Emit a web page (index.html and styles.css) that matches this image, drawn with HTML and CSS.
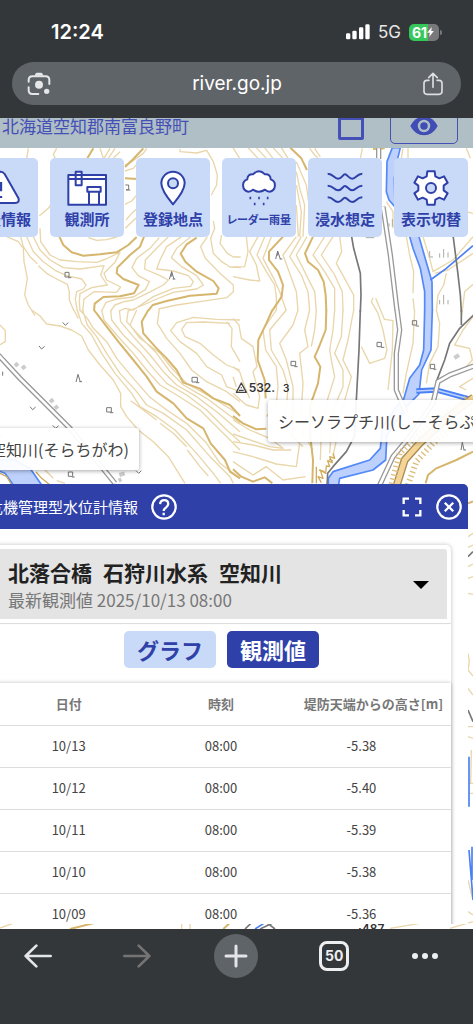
FILE: index.html
```html
<!DOCTYPE html>
<html lang="ja">
<head>
<meta charset="utf-8">
<meta name="viewport" content="width=device-width, initial-scale=1">
<title>river.go.jp</title>
<link rel="stylesheet" href="styles.css">
</head>
<body>
<header class="browser-top">
  <div class="status">
    <span class="clock">12:24</span>
    <div class="status-right">
      <svg class="signal" viewBox="0 0 72 48" aria-hidden="true"><rect x="0" y="28" width="13" height="18" rx="4"/><rect x="19" y="20" width="13" height="26" rx="4"/><rect x="39" y="10" width="13" height="36" rx="4"/><rect x="58" y="1" width="13" height="45" rx="4"/></svg>
      <span class="network">5G</span>
      <span class="battery"><span class="battery-level">61</span><svg class="bolt" viewBox="0 0 20 30" aria-hidden="true"><path d="M14 0 0 17h8L6 30 20 12h-8z"/></svg></span>
    </div>
  </div>
  <div class="urlbar">
    <button class="plain" aria-label="カメラ検索"><svg class="lens" viewBox="0 0 72 72" aria-hidden="true"><path d="M5 29v-5Q5 13 16 13h40q11 0 11 11v12M5 46v9q0 11 11 11h18" fill="none" stroke="#e4e6e8" stroke-width="6" stroke-linecap="round"/><path d="M22 11l5-8q1-1 3-1h12q2 0 3 1l5 8z" fill="#e4e6e8"/><circle cx="36" cy="38" r="12" fill="#e4e6e8"/><circle cx="59" cy="58" r="8" fill="#e4e6e8"/></svg></button>
    <span class="url">river.go.jp</span>
    <button class="plain" aria-label="共有"><svg class="share" viewBox="0 0 60 72" aria-hidden="true"><path d="M18 25H12Q3 25 3 34v24q0 9 9 9h36q9 0 9-9V34q0-9-9-9h-6M30 46V5M17 17 30 4l13 13" fill="none" stroke="#dcdedf" stroke-width="5" stroke-linecap="round" stroke-linejoin="round"/></svg></button>
  </div>
</header>

<main class="page">
  <svg class="map" viewBox="0 354 1419 2433" preserveAspectRatio="xMinYMin slice" aria-hidden="true">
    <g transform="translate(0 435)">
      <path class="thin" d="M85 10 80 40M170 10 160 28 175 60M300 10 310 40M330 10 312 40M345 10 325 40M360 20 340 40M375 60 395 50 430 25 440 10M375 78 400 70 425 40M540 12 540 20 590 24 620 16 640 50 652 90 650 120 634 150M375 178 395 168 412 148M378 225 395 205 412 190M376 250 412 215M118 212 145 190 156 172M20 275 55 290 70 310 72 350 82 400 74 450 85 480 105 512M62 275 70 305 90 335 112 356M115 362 140 385 170 402 202 418 208 440 208 465 222 498M80 275 100 320 130 350 165 376 200 392 245 402 258 420 250 432 230 440 226 462 232 498M120 250 122 290 150 330 180 345 230 350 290 352 318 342 360 322 345 352 312 385 320 405 362 426 350 442 282 440 252 462 248 498M100 275 120 315 150 345 190 368 240 372 312 362 302 390 322 420 275 428 240 446 238 470 240 498M265 278 290 286 320 284 350 276M478 278 450 310 410 340 396 368 415 392 448 410 436 434 400 456 350 462 318 472 305 498M505 275 470 310 436 345 434 372 480 392 505 405 490 420 440 446 400 465 372 470 345 480 332 498M545 275 500 305 480 345 470 372 520 378 565 392 580 410 572 424 520 430 460 455 400 495 375 490 358 498M572 275 530 310 514 338 545 365 590 392 610 420 590 432 520 442 470 462 430 480 385 498M622 275 602 305 616 340 660 385 700 420 700 440 680 458 600 470 530 480 475 492M640 228 644 250 632 280 640 325 665 350 690 366 722 368M665 270 660 295 682 325 700 336 722 336"/>
      <path class="thick" d="M280 10 262 40M375 66 400 42 430 10M375 100 412 102M178 275 190 300 215 322 250 332 300 328 350 322 385 300 410 276M432 275 420 305 390 330 352 368 350 385 370 402 416 420 402 445 360 454 310 456 284 476 282 497M590 278 560 298 542 326 556 350 590 380 640 408 656 430 650 446 570 452 500 468 458 480 445 497"/>
      <path class="mark" d="M376 120h10v14h-8M378 135h13M195 382h12v14h-12zM204 398h10M508 403 515 380 522 403M518 402h8M515 380V395"/>
    </g>
    <g transform="translate(699 435)">
      <path class="thin" d="M45 8 75 40M70 8 100 40M95 8 120 40M120 8 150 40M145 8 165 40M0 8 20 40M230 10 245 30 255 40M245 10 262 36M388 10 382 40M190 80 200 130 215 180 210 275M190 120 205 200 200 275M190 50 220 120 228 180M190 180 196 275M40 275 45 320 35 365 0 366M75 275 50 320 70 360 80 408 50 405 0 395M95 275 72 330 100 380 125 420 130 455 130 497M115 275 90 340 122 400 140 440 160 497M190 275 150 330 172 390 190 440 195 497M205 275 170 335 205 390 225 440 230 497M222 275 190 330 225 400 245 440 250 497M275 275 240 330 275 380 305 430 305 497M300 275 265 330 305 390 328 440 330 497M320 275 326 320 310 355 340 410 362 450 362 497M420 458 415 470 435 505M428 460 455 525M520 275 530 330 542 380 540 445M540 460 544 497M570 275 590 340 600 380 660 345 720 275M605 385 645 375 720 325M640 385 632 420 615 450 610 497M700 200 720 205M720 418 695 440 686 512M510 10 505 40M525 10 525 40M700 10 712 40M460 170 480 200 480 250"/>
      <path class="thick" d="M172 8 205 40 222 75M150 275 108 320 108 345 135 380 150 420 146 455 118 497M240 275 216 325 225 350 255 375 272 410 278 450 280 497M420 12 455 10"/>
      <path class="road" d="M437 10V42M450 185 472 330 492 497"/>
      <path class="road-in" d="M437 10V42M450 185 472 330 492 497"/>
      <path class="river" d="M575 497 575 440 562 370 540 310 520 240 540 190 490 190 468 165 460 140 462 50 478 8 502 8 492 50 484 100 486 185 530 190 558 275 578 345 597 410 598 497"/>
      <path class="stream" d="M592 405 640 370 720 302"/>
      <path class="track" d="M355 270 362 310 382 385 384 450 382 500M660 270 674 380 682 450 685 500"/>
      <path class="mark" d="M128 342 134 318 142 342M140 342h8M134 320V332"/>
      <path class="mark soft" d="M468 245V235M478 245V222M620 338V325M632 338V312M645 338V322M590 318V336H600M620 478V465M632 478V450M645 478V465M398 278h26"/>
    </g>
    <g transform="translate(0 930)">
      <path class="thin" d="M95 0 120 18 140 42 180 48 215 60 245 78 265 120 300 165 340 210 362 250 362 290 380 320 415 360 460 395 505 440 555 520M0 45 16 62 16 95 0 104M232 0 245 40 275 75 305 130 345 190 395 250 420 290 470 320 525 360 590 430 640 490 662 520M248 0 262 45 290 80 320 130 360 190 410 245 440 285 490 310 560 360 630 440 690 500 700 520M240 0 262 25 280 55 320 95 350 145 400 205 450 262 500 300 560 340 620 400 660 460 720 505M222 0 235 25M305 0 312 30 350 75 400 130 440 180 480 225 530 255 600 300 660 360 720 420M332 0 335 30 370 75 420 125 460 175 500 220 560 255 620 300 680 360 720 395M358 0 362 35 400 80 450 135 490 185 530 225 590 260 650 305 720 365M385 0 380 35 430 90 470 130 510 185 550 225 620 265 680 310 720 340M410 0 390 45 420 85 480 130 520 180 560 220 640 265 720 315M392 272 430 300 470 330M480 340 520 370 560 410M562 420 600 470 625 498M478 -2 472 40 500 85 540 130 575 180 620 215 680 245 720 275M720 30 650 28 580 22 530 38 512 62 540 95 590 130 620 170 665 195 680 230 720 245M690 40 610 36 560 38 545 58 555 80 600 100 640 135 680 165 720 180M680 36 696 55 694 110 720 155M0 375 40 410 90 445M110 455 160 505M170 512 195 520M0 440 60 450"/>
      <path class="thick" d="M282 0 320 50 355 95 400 150 440 200 470 245 520 280 560 325 610 355 632 400 675 450 690 485 720 505M445 0 425 35 430 70 470 115 500 145 530 180 550 218 600 236 640 265 690 285 720 318"/>
      <path class="road" d="M-5 135 60 205 130 275 210 355 280 440 345 520"/>
      <path class="road-in" d="M-5 135 60 205 130 275 210 355 280 440 345 520"/>
      <path class="river" d="M-10 450 40 448 90 475 125 525 40 525 15 490 -10 480z"/>
      <path class="cliff" d="M0 490 20 500 35 525M108 486 125 505 150 525"/>
      <path class="mark" d="M188 37 196 46 205 38M117 108 125 117 134 109M90 290 98 299 107 291M158 346 167 355 176 347M8 185V197M228 216 234 193 241 216M238 215h8M320 293h14v13h-14zM330 308h10M576 202h16v14h-16zM588 218h10M205 486h13v13h-13zM216 501h8M408 482 416 490 424 482"/>
      <path class="building" d="M45 168 54 160M66 176 76 168M150 276 160 268M164 296 174 288M358 495 374 490M356 512 364 508"/>
    </g>
    <g transform="translate(699 930)">
      <path class="thin" d="M0 25 18 45 25 85 60 110 72 170 60 185 80 260 75 295 40 285 0 250M0 170 20 185 35 230 50 265M0 200 10 230M130 0 90 60 98 120 130 170 135 230 130 280 100 320M160 0 110 60 115 120 150 180 165 230 160 300 150 350 200 400 190 470 130 462 60 440 0 425M195 0 180 45 140 100 160 150 180 230 180 300 180 380 210 410M230 0 215 60 225 110 200 130 210 220 205 300 210 370 240 420M250 0 245 60 235 110M305 0 300 60 290 120 295 150 305 200 280 280 265 360 262 450M330 0 325 80 305 130 330 180 330 230 300 300 290 430M362 0 345 90 330 150 355 200 330 290 300 440M435 10 450 60 462 120 455 145 410 160 385 110M455 28 480 32 478 120 465 240M545 0 540 100 520 190 510 250M610 0 620 40 615 110 590 160 580 220M720 20 690 60 665 105 710 115 718 150 690 180M0 330 50 360 110 385 150 415 110 410 0 372M0 395 60 405 120 420 175 420M0 455 60 495 100 470 150 510 218 500M720 205 680 230 700 240"/>
      <path class="thick" d="M118 0 100 40 76 90 74 150 95 210 98 265M280 0 278 60 255 118 245 140 262 170 255 220 232 285 232 380 240 450 238 520M0 318 30 340 70 358 100 356M0 478 25 500 60 515 95 502 118 520M720 425 670 450 610 475 585 495 578 520"/>
      <path class="cliff" d="M300 430 305 445 290 440 298 458 284 452 290 470 280 468 278 490 262 480 270 505 255 500 265 518M250 470V520M258 480 275 485M288 448 300 452"/>
      <path class="river" d="M575 0 572 120 560 165 530 205 512 268 490 290 448 350 442 415 410 450 300 485 286 505 286 540 314 540 320 505 420 480 458 450 462 375 520 290 558 252 566 180 594 120 598 0"/>
      <path class="stream-wide" d="M550 243 610 240 720 270"/>
      <path class="stream-in" d="M550 243 610 240 720 270"/>
      <path class="track" d="M382 0 378 120 370 270 364 380 340 425 300 470 284 490 282 530M685 0V45M722 15 680 55 650 100 635 150 610 215"/>
      <path class="road" d="M492 0 500 60 490 130 490 240 520 310M722 168 650 195 615 215 600 280 530 380 480 440 438 530"/>
      <path class="road-in" d="M492 0 500 60 490 130 490 240 520 310M722 168 650 195 615 215 600 280 530 380 480 440 438 530"/>
      <path class="highway" d="M722 262 640 325 560 400 515 450 490 530"/>
      <path class="highway-in" d="M722 262 640 325 560 400 515 450 490 530"/>
      <path class="comb" d="M700 265 545 385 500 430 475 525"/>
      <path class="comb" d="M722 305 600 400 550 455 525 525"/>
      <path class="mark" d="M174 154h14v13h-14zM184 170h10M432 97h13v13h-13zM444 112h10M538 32h13v13h-13zM548 48h10M592 163h13v13h-13zM602 178h8M684 420 688 397 693 420M692 420h7"/>
      <path class="building" d="M664 144 678 135"/>
      <path class="peak" d="M25 219 40 247H10zM25 232v3M18 241h14"/>
      <text class="peak-label" x="47" y="245">532.</text><text class="peak-label small" x="150" y="245">3</text>
    </g>
    <path class="thin" d="M1404 1610 1419 1600M1404 1642 1419 1635M1404 1700 1419 1692M1404 1735 1419 1730M1404 1780 1419 1783M1404 1960 1408 1985 1404 2010 1419 2028M1404 2065 1419 2085M1404 2180 1419 2180M1404 2210 1419 2215M1414 2250 1412 2350M1404 2350h15M1404 2380h15M1404 2640 1419 2700M1404 2735 1419 2745M0 2784 45 2768M545 2770V2787M570 2770V2787M1170 2785 1260 2770M1350 2785 1419 2765"/>
    <path class="thick" d="M210 2787 280 2770M670 2787 690 2768M1404 1510 1419 1504"/>
    <path class="track" d="M1404 1670 1419 1655M1404 2130 1419 2165"/>
    <path class="stream" d="M1407 2270V2420M1407 2550 1419 2700M1416 2540V2640M765 2787 795 2768"/>
    <path class="track" d="M735 2787 755 2768M780 2787 820 2768M800 2768 825 2787"/>
    <text class="spot-label" x="1074" y="2799">·487</text>
  </svg>

  <div class="address-bar">
    <span class="address">北海道空知郡南富良野町</span>
    <input class="address-check" type="checkbox" aria-label="地図選択">
    <button class="eye-button" aria-label="表示"><svg class="eye" viewBox="0 0 90 62" aria-hidden="true"><path d="M1 31Q17 1 45 1t44 30Q73 61 45 61T1 31z" fill="#3f4db5"/><circle cx="45" cy="31" r="16" fill="none" stroke="#b0bec5" stroke-width="8"/></svg></button>
  </div>

  <nav class="tools" aria-label="地図メニュー">
    <button class="tool"><svg viewBox="0 0 120 108" aria-hidden="true"><path class="ink" d="M49 12Q60-2 71 12L112 84q5 14-10 15H18Q3 98 8 84z"/><path d="M60 36v28M60 78v6" fill="none" stroke="#2f41a8" stroke-width="7"/></svg><span>発表情報</span></button>
    <button class="tool"><svg viewBox="0 0 120 108" aria-hidden="true"><path class="ink" d="M4 15h113v89H4zM4 27h113M26 5h18v41H26zM61 51h40v14H61zM66 65h30v39H66z"/></svg><span>観測所</span></button>
    <button class="tool"><svg viewBox="0 0 120 108" aria-hidden="true"><path class="ink" d="M60 103Q25 62 25 40a35 35 0 0 1 70 0q0 22-35 63z"/><circle class="ink lit" cx="60" cy="40" r="15"/></svg><span>登録地点</span></button>
    <button class="tool"><svg viewBox="0 0 120 108" aria-hidden="true"><path class="ink" d="M28 65a18 19 0 0 1-3-37Q25 12 42 13q18-18 36 0 17-1 17 15a18 19 0 0 1-3 37q-8 0-14-6-18 12-36 0-6 6-14 6z"/><path d="M34 80v8M60 80v8M86 80v8M47 98v8M74 98v8" fill="none" stroke="#2f41a8" stroke-width="5"/></svg><span class="tight">レーダー雨量</span></button>
    <button class="tool"><svg viewBox="0 0 120 108" aria-hidden="true"><path class="wave" d="M8 11C25 11 27 26 39 26S53 13 60 13 71 26 82 26 96 11 112 11M8 47C25 47 27 61 39 61S53 48 60 48 71 61 82 61 96 47 112 47M8 82C25 82 27 96 39 96S53 83 60 83 71 96 82 96 96 82 112 82"/></svg><span>浸水想定</span></button>
    <button class="tool"><svg viewBox="0 0 120 108" aria-hidden="true"><path class="ink" d="M49 4h22l2 15 12 6 14-6 11 19-12 9v14l12 9-11 19-14-6-12 6-2 15H49l-2-15-12-6-14 6L10 70l12-9V47L10 38l11-19 14 6 12-6z"/><circle class="ink lit" cx="60" cy="54" r="15"/></svg><span>表示切替</span></button>
  </nav>

  <div class="map-view">
    <span class="river-label river-label-main">シーソラプチ川(しーそらぷちがわ)</span>
    <span class="river-label river-label-sub">空知川(そらちがわ)</span>
  </div>

  <section class="panel">
    <header class="panel-head">
      <h1 class="panel-title">危機管理型水位計情報</h1>
      <button class="plain" aria-label="ヘルプ"><svg class="round-icon" viewBox="0 0 80 80" aria-hidden="true"><circle cx="40" cy="40" r="36"/><path d="M28 31q1-12 13-12t12 12q0 6-7 11-7 5-7 10M39 58v7"/></svg></button>
      <div class="panel-actions">
        <button class="plain" aria-label="全画面"><svg class="full-icon" viewBox="0 0 60 60" aria-hidden="true"><path d="M5 21V5h16M39 5h16v16M55 39v16H39M21 55H5V39"/></svg></button>
        <button class="plain" aria-label="閉じる"><svg class="round-icon" viewBox="0 0 80 80" aria-hidden="true"><circle cx="40" cy="40" r="36"/><path d="M27 27 53 53M53 27 27 53"/></svg></button>
      </div>
    </header>
    <div class="card">
      <button class="station">
        <span class="station-text">
          <span class="station-name"><span>北落合橋</span><span>石狩川水系</span><span>空知川</span></span>
          <span class="station-time">最新観測値 2025/10/13 08:00</span>
        </span>
        <svg class="caret" viewBox="0 0 16 8" aria-hidden="true"><path d="M0 0h16L8 8z"/></svg>
      </button>
      <div class="tabs">
        <button class="tab">グラフ</button>
        <button class="tab tab-on">観測値</button>
      </div>
      <table class="readings">
        <thead><tr><th class="col-date">日付</th><th class="col-time">時刻</th><th class="col-level">堤防天端からの高さ[m]</th></tr></thead>
        <tbody>
          <tr><td>10/13</td><td>08:00</td><td>-5.38</td></tr>
          <tr><td>10/12</td><td>08:00</td><td>-5.40</td></tr>
          <tr><td>10/11</td><td>08:00</td><td>-5.39</td></tr>
          <tr><td>10/10</td><td>08:00</td><td>-5.38</td></tr>
          <tr><td>10/09</td><td>08:00</td><td>-5.36</td></tr>
        </tbody>
      </table>
    </div>
  </section>
</main>

<footer class="browser-bottom">
  <button class="nav-button" aria-label="戻る"><svg class="arrow" viewBox="0 0 84 72" aria-hidden="true"><path d="M80 36H5M37 5 5 36l32 31"/></svg></button>
  <button class="nav-button" aria-label="進む"><svg class="arrow arrow-off" viewBox="0 0 84 72" aria-hidden="true"><path d="M4 36h75M47 5l32 31-32 31"/></svg></button>
  <button class="nav-button new-tab" aria-label="新しいタブ"><svg class="plus" viewBox="0 0 24 24" aria-hidden="true"><path d="M12 2v20M2 12h20"/></svg></button>
  <button class="nav-button" aria-label="タブ一覧"><span class="tab-count">50</span></button>
  <button class="nav-button nav-more" aria-label="メニュー"><svg class="dots" viewBox="0 0 28 8" aria-hidden="true"><circle cx="4" cy="4" r="3"/><circle cx="14" cy="4" r="3"/><circle cx="24" cy="4" r="3"/></svg></button>
</footer>
</body>
</html>
```

FILE: styles.css
```css
* { box-sizing: border-box; }

body {
  margin: 0;
  height: 100vh;
  display: flex;
  flex-direction: column;
  overflow: hidden;
  background: #fff;
  color: #444;
  font-family: "Noto Sans CJK JP", sans-serif;
}

button {
  margin: 0;
  padding: 0;
  border: 0;
  background: none;
  color: inherit;
  font: inherit;
  flex: none;
}

svg { display: block; }

.plain { display: flex; }

/* Browser chrome */
.browser-top {
  flex: none;
  padding: 0 12px 13px;
  background: #343739;
  color: #fff;
  font-family: Inter, sans-serif;
}

.status {
  height: 62px;
  padding: 2px 22px 0 39px;
  display: flex;
  align-items: center;
  justify-content: space-between;
}

.clock { font-size: 20px; font-weight: 600; }
.status-right { display: flex; align-items: center; gap: 8px; }
.signal { width: 24px; height: 16px; fill: #fff; }
.network { font-size: 17px; color: #e8e8e8; }

.battery {
  position: relative;
  width: 30px;
  height: 17px;
  padding: 0 3px;
  display: flex;
  align-items: center;
  border-radius: 5px;
  background: linear-gradient(90deg, #35c759 62%, #77797a 62%);
  font-size: 14px;
  font-weight: 700;
}

.battery::after {
  content: "";
  position: absolute;
  right: -3px;
  top: 6px;
  width: 2px;
  height: 5px;
  border-radius: 0 2px 2px 0;
  background: #77797a;
}

.bolt { width: 7px; height: 10px; fill: #fff; }

.urlbar {
  height: 43px;
  padding: 0 18px 0 15px;
  display: flex;
  align-items: center;
  justify-content: space-between;
  border-radius: 22px;
  background: #5f6468;
}

.url { font-size: 19px; }
.lens { width: 24px; height: 24px; }
.share { width: 20px; height: 24px; }

/* Page */
.page {
  position: relative;
  flex: 1;
  min-height: 0;
  display: flex;
  flex-direction: column;
  padding-bottom: 5px;
  overflow: hidden;
}

.map { position: absolute; inset: 0; width: 100%; height: 100%; }
.map path { fill: none; stroke-linejoin: round; }
.map .thin { stroke: #e9d6aa; stroke-width: 4; }
.map .thick { stroke: #d6b56c; stroke-width: 6; }
.map .river { fill: #bdd1fc; stroke: #5388f8; stroke-width: 5; }
.map .stream { stroke: #4a80f5; stroke-width: 5; }
.map .stream-wide { stroke: #4a80f5; stroke-width: 16; }
.map .stream-in { stroke: #bdd1fc; stroke-width: 5; }
.map .road { stroke: #999; stroke-width: 16; }
.map .road-in { stroke: #fff; stroke-width: 8; }
.map .track { stroke: #777; stroke-width: 5; }
.map .highway { stroke: #a98c50; stroke-width: 24; }
.map .highway-in { stroke: #f5d597; stroke-width: 16; }
.map .comb { stroke: #dcbd7a; stroke-width: 18; stroke-dasharray: 4 9; }
.map .cliff { stroke: #d2ac5c; stroke-width: 4; }
.map .mark { stroke: #777; stroke-width: 3; }
.map .soft { stroke: #aaa; }
.map .building { stroke: #ccc; stroke-width: 12; }
.map .peak { stroke: #444; stroke-width: 4; }
.peak-label { font: 600 36px Inter, sans-serif; fill: #333; }
.peak-label.small { font-size: 30px; }
.spot-label { font: 600 36px Inter, sans-serif; fill: #333; }

.address-bar {
  position: relative;
  flex: none;
  height: 30px;
  padding: 0 15px 0 2px;
  display: flex;
  align-items: flex-end;
  background: #b0bec5;
  color: #4450b6;
}

.address { flex: 1; padding-bottom: 10px; font-size: 17px; line-height: 24px; }

.address-check {
  appearance: none;
  width: 26px;
  height: 23px;
  margin: 0 26px 8px 0;
  border: 3px solid #4450b6;
  border-radius: 2px;
}

.eye-button {
  width: 68px;
  height: 36px;
  margin-bottom: 4px;
  display: flex;
  align-items: center;
  justify-content: center;
  border: 1px solid #4450b6;
  border-radius: 5px;
}

.eye { width: 28px; height: 20px; }

.tools {
  position: relative;
  flex: none;
  display: flex;
  gap: 12px;
  margin: 10px 0 0 -36px;
}

.tool {
  width: 74px;
  height: 79px;
  padding-top: 12px;
  display: flex;
  flex-direction: column;
  align-items: center;
  gap: 3px;
  border-radius: 5px;
  background: #c9d9f8;
  color: #2f41a8;
  font-size: 15px;
  font-weight: 700;
  line-height: 20px;
  white-space: nowrap;
}

.tool svg { width: 40px; height: 36px; }
.tight { font-size: 11px; font-feature-settings: "palt"; }
.ink { fill: #fff; stroke: #2f41a8; stroke-width: 6; stroke-linejoin: round; }
.lit { fill: #c9d9f8; }
.wave { fill: none; stroke: #2f41a8; stroke-width: 6; }

.map-view { position: relative; flex: none; height: 247px; }

.river-label {
  position: absolute;
  padding: 9px 10px;
  border-radius: 3px;
  background: rgba(255, 255, 255, 0.93);
  box-shadow: 0 1px 4px rgba(0, 0, 0, 0.35);
  font-size: 16px;
  line-height: 24px;
  white-space: nowrap;
}

.river-label-main { left: 268px; top: 163px; }
.river-label-sub { left: -20px; top: 191px; }

/* Observation panel */
.panel {
  position: relative;
  flex: 1;
  min-height: 0;
  margin: 0 5px 0 -33px;
  overflow: hidden;
  border-radius: 0 5px 0 0;
  background: #fff;
}

.panel-head {
  height: 45px;
  padding: 0 6px 0 21px;
  display: flex;
  align-items: center;
  gap: 13px;
  background: #2f41a8;
  color: #fff;
}

.panel-title { margin: 0; font-size: 15px; font-weight: 400; white-space: nowrap; }
.panel-actions { margin-left: auto; display: flex; align-items: center; gap: 14px; }
.round-icon { width: 26px; height: 26px; fill: none; stroke: #fff; stroke-width: 7; }
.full-icon { width: 20px; height: 20px; fill: none; stroke: #fff; stroke-width: 7; }

.card {
  margin: 16px 17px 0 0;
  border-radius: 5px;
  background: #fff;
  box-shadow: 0 0 4px rgba(0, 0, 0, 0.25);
}

.station {
  width: 100%;
  height: 78px;
  padding: 2px 18px 0 41px;
  display: flex;
  align-items: center;
  justify-content: space-between;
  border: 4px solid #fff;
  border-left: 0;
  border-radius: 7px 7px 0 0;
  background: #e4e4e4;
  box-shadow: 0 1px 1px rgba(0, 0, 0, 0.15);
  text-align: left;
}

.station-text { display: flex; flex-direction: column; }

.station-name {
  display: flex;
  gap: 11px;
  color: #222;
  font-size: 21px;
  font-weight: 700;
  line-height: 30px;
}

.station-time { color: #777; font-size: 17px; line-height: 26px; }
.caret { width: 16px; height: 8px; }

.tabs {
  padding: 8px 0 15px 157px;
  display: flex;
  gap: 11px;
}

.tab {
  width: 92px;
  height: 37px;
  border-radius: 5px;
  background: #c9d9f8;
  color: #2f41a8;
  font-size: 22px;
  font-weight: 700;
  line-height: 37px;
}

.tab-on { background: #2f41a8; color: #fff; }

.readings {
  width: 100%;
  table-layout: fixed;
  border-collapse: collapse;
  box-shadow: 0 0 4px rgba(0, 0, 0, 0.25);
  font-size: 13px;
  line-height: 20px;
  text-align: center;
}

.readings th, .readings td { height: 42px; padding: 0; border-bottom: 1px solid #ddd; }
.readings th { color: #777; font-weight: 700; }
.col-date { width: 42%; }
.col-time { width: 21%; }
.readings .col-level { width: 37%; padding-left: 24px; white-space: nowrap; }

/* Bottom toolbar */
.browser-bottom {
  flex: none;
  height: 95px;
  padding: 5px 34px 0 16px;
  display: flex;
  justify-content: space-between;
  background: #343739;
}

.nav-button {
  width: 44px;
  height: 44px;
  display: flex;
  align-items: center;
  justify-content: center;
}

.nav-more { width: 28px; }
.arrow { width: 28px; height: 24px; fill: none; stroke: #e3e5e8; stroke-width: 8; stroke-linecap: round; stroke-linejoin: round; }
.arrow-off { stroke: #747474; }
.new-tab { border-radius: 50%; background: #5f6468; }
.plus { width: 24px; height: 24px; fill: none; stroke: #e3e5e8; stroke-width: 3; stroke-linecap: round; }

.tab-count {
  width: 30px;
  height: 30px;
  border: 3px solid #eceef0;
  border-radius: 8px;
  color: #eceef0;
  font: 700 14px/24px Inter, sans-serif;
  text-align: center;
}

.dots { width: 28px; height: 8px; fill: #eceef0; }
```
